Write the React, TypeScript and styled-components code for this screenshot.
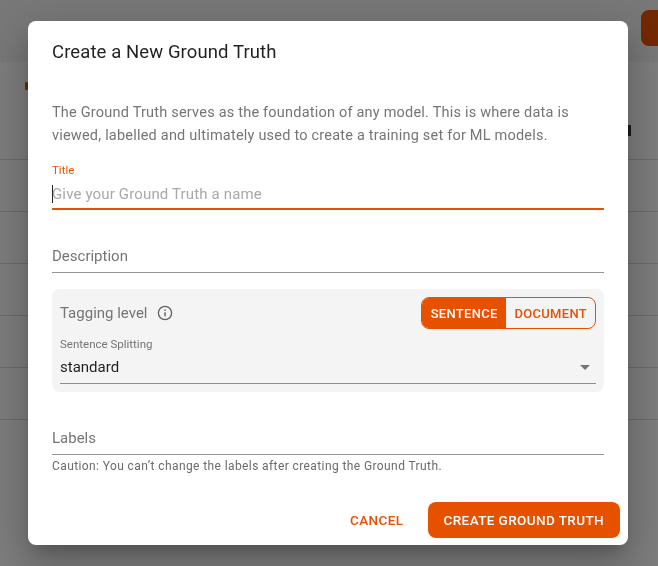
import styled, { createGlobalStyle } from 'styled-components';

const ORANGE = '#e65100';
const ROW_COUNT = 5;

const GlobalStyle = createGlobalStyle`
  html, body {
    margin: 0;
    height: 100%;
    overflow: hidden;
    background: #fafafa;
    font-family: Roboto, "Liberation Sans", sans-serif;
  }
  * { box-sizing: border-box; }
`;

const App = () => {
  return (
    <>
      <GlobalStyle />
      <Page>
        <TopBar>
          <NewButton />
        </TopBar>
        <TableArea>
          <TableHead>
            <Mark />
            <HeadEnd />
          </TableHead>
          {Array.from({ length: ROW_COUNT }).map((_, i) => (
            <TableRow key={i} />
          ))}
        </TableArea>
      </Page>
      <Backdrop>
        <Dialog>
          <DialogTitle>Create a New Ground Truth</DialogTitle>
          <Intro>
            The Ground Truth serves as the foundation of any model. This is where data is viewed, labelled and
            ultimately used to create a training set for ML models.
          </Intro>
          <FocusField>
            <FocusLabel>Title</FocusLabel>
            <FocusValue>
              <Caret />
              Give your Ground Truth a name
            </FocusValue>
          </FocusField>
          <PlainField>Description</PlainField>
          <TaggingPanel>
            <TaggingRow>
              <TaggingLabel>
                Tagging level
                <svg width="16" height="16" viewBox="0 0 16 16" fill="none" stroke="#616161">
                  <circle cx="8" cy="8" r="6.6" strokeWidth="1.3" />
                  <path d="M8 7.2v4" strokeWidth="1.4" />
                  <path d="M8 4.6v1.5" strokeWidth="1.4" />
                </svg>
              </TaggingLabel>
              <Toggle>
                <ToggleOption $active>SENTENCE</ToggleOption>
                <ToggleOption>DOCUMENT</ToggleOption>
              </Toggle>
            </TaggingRow>
            <SelectLabel>Sentence Splitting</SelectLabel>
            <SelectBox>
              standard
              <Arrow />
            </SelectBox>
          </TaggingPanel>
          <LabelsField>Labels</LabelsField>
          <Caution>Caution: You can’t change the labels after creating the Ground Truth.</Caution>
          <Actions>
            <CancelButton>CANCEL</CancelButton>
            <CreateButton>CREATE GROUND TRUTH</CreateButton>
          </Actions>
        </Dialog>
      </Backdrop>
    </>
  );
};

export default App;

const Page = styled.div`
  height: 566px;
  display: flex;
  flex-direction: column;
`;

const TopBar = styled.div`
  height: 62px;
  padding: 10px 0 0 641px;
  flex-shrink: 0;
  background: #f0f0f0;
`;

const NewButton = styled.div`
  width: 40px;
  height: 36px;
  border-radius: 8px;
  background: ${ORANGE};
`;

const TableArea = styled.div`
  flex: 1;
  background: #fafafa;
`;

const TableHead = styled.div`
  height: 98px;
  padding: 20px 27px 0 25px;
  border-bottom: 1px solid #d6d6d6;
  display: flex;
  justify-content: space-between;
`;

const Mark = styled.div`
  width: 3px;
  height: 8px;
  border-radius: 1px;
  background: ${ORANGE};
`;

const HeadEnd = styled.div`
  width: 3px;
  height: 11px;
  margin-top: 43px;
  background: #333;
`;

const TableRow = styled.div`
  height: 52px;
  border-bottom: 1px solid #d6d6d6;
`;

const Backdrop = styled.div`
  position: fixed;
  inset: 0;
  background: rgba(0, 0, 0, 0.5);
  display: flex;
  padding: 21px 0 0 28px;
`;

const Dialog = styled.div`
  width: 600px;
  height: 524px;
  background: #fff;
  border-radius: 8px;
  padding: 20px 24px 7px;
  box-shadow: 0 11px 15px -7px rgba(0, 0, 0, 0.2), 0 24px 38px 3px rgba(0, 0, 0, 0.14),
    0 9px 46px 8px rgba(0, 0, 0, 0.12);
  display: flex;
  flex-direction: column;
`;

const DialogTitle = styled.h2`
  margin: 0;
  font-size: 18.5px;
  line-height: 22px;
  font-weight: 400;
  letter-spacing: 0.1px;
  color: rgba(0, 0, 0, 0.87);
`;

const Intro = styled.p`
  margin: 38px 0 0;
  font-size: 14.5px;
  line-height: 23px;
  letter-spacing: 0.21px;
  color: #757575;
`;

const FocusField = styled.div`
  margin-top: 16px;
  height: 47px;
  border-bottom: 2px solid ${ORANGE};
`;

const FocusLabel = styled.div`
  font-size: 11.5px;
  line-height: 14px;
  color: ${ORANGE};
`;

const FocusValue = styled.div`
  display: flex;
  align-items: center;
  height: 24px;
  margin-top: 5px;
  font-size: 15px;
  letter-spacing: 0.15px;
  color: #a8a8a8;
`;

const Caret = styled.span`
  width: 1px;
  height: 18px;
  margin-right: -1px;
  background: #222;
`;

const PlainField = styled.div`
  margin-top: 36px;
  height: 27px;
  font-size: 15px;
  line-height: 20px;
  color: #757575;
  border-bottom: 1px solid #949494;
`;

const TaggingPanel = styled.div`
  margin-top: 16px;
  height: 103px;
  background: #f4f4f4;
  border-radius: 8px;
  padding: 8px;
`;

const TaggingRow = styled.div`
  display: flex;
  justify-content: space-between;
  align-items: center;
`;

const TaggingLabel = styled.div`
  display: flex;
  align-items: center;
  gap: 10px;
  font-size: 15px;
  color: #757575;
`;

const Toggle = styled.div`
  display: flex;
  height: 32px;
  border: 1px solid ${ORANGE};
  border-radius: 8px;
  overflow: hidden;
`;

const ToggleOption = styled.div<{ $active?: boolean }>`
  display: flex;
  align-items: center;
  padding: ${(p) => (p.$active ? '0 8.8px 0 9px' : '0 8px')};
  font-size: 13px;
  font-weight: 500;
  letter-spacing: 0.3px;
  background: ${(p) => (p.$active ? ORANGE : 'transparent')};
  color: ${(p) => (p.$active ? '#fff' : ORANGE)};
`;

const SelectLabel = styled.div`
  margin-top: 8px;
  font-size: 11.5px;
  line-height: 14px;
  color: #757575;
`;

const SelectBox = styled.div`
  display: flex;
  justify-content: space-between;
  align-items: center;
  height: 33px;
  font-size: 15px;
  color: rgba(0, 0, 0, 0.87);
  border-bottom: 1px solid #8f8f8f;
`;

const Arrow = styled.span`
  width: 0;
  height: 0;
  margin-right: 6px;
  border-left: 5px solid transparent;
  border-right: 5px solid transparent;
  border-top: 5px solid #757575;
`;

const LabelsField = styled.div`
  margin-top: 37px;
  height: 26px;
  font-size: 15px;
  line-height: 18px;
  color: #757575;
  border-bottom: 1px solid #949494;
`;

const Caution = styled.div`
  margin-top: 4px;
  font-size: 12px;
  line-height: 14px;
  letter-spacing: 0.4px;
  color: #6b6b6b;
`;

const Actions = styled.div`
  margin-top: auto;
  display: flex;
  justify-content: flex-end;
  align-items: center;
  gap: 8px;
  margin-right: -16px;
`;

const CancelButton = styled.div`
  padding: 0 16px;
  font-size: 13.5px;
  font-weight: 500;
  letter-spacing: 0.4px;
  color: ${ORANGE};
`;

const CreateButton = styled.div`
  height: 36px;
  display: flex;
  align-items: center;
  padding: 0 16px;
  border-radius: 8px;
  background: ${ORANGE};
  font-size: 13.5px;
  font-weight: 500;
  letter-spacing: 0.4px;
  color: #fff;
`;
